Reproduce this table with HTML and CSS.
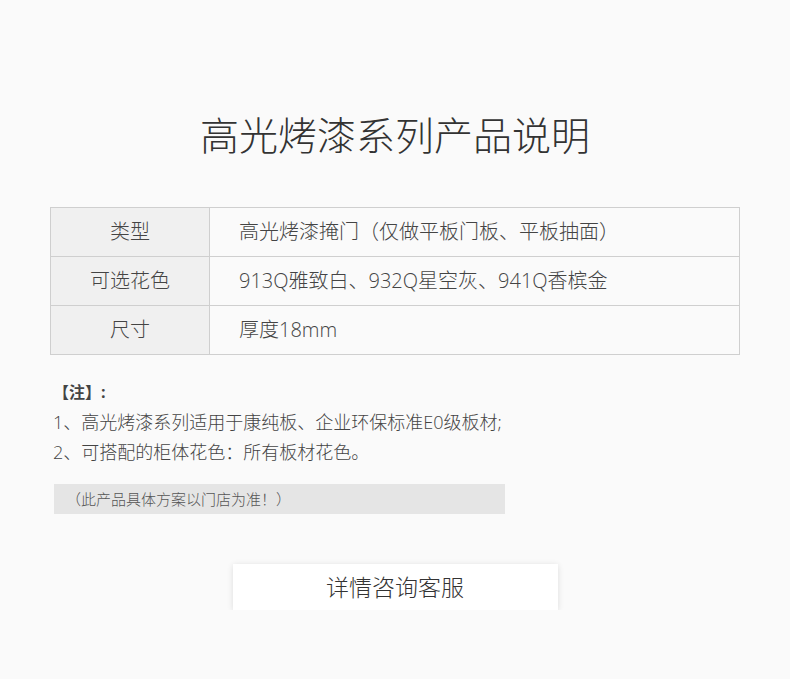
FILE: index.html
```html
<!DOCTYPE html>
<html lang="zh-CN">
<head>
    <meta charset="UTF-8">
    <meta name="viewport" content="width=device-width, initial-scale=1.0">
    <title>高光烤漆系列产品说明</title>
    <link rel="stylesheet" href="styles.css">
</head>
<body>
    <div class="page">
        <h1 class="title">高光烤漆系列产品说明</h1>

        <table class="spec-table">
            <tr>
                <th>类型</th>
                <td>高光烤漆掩门（仅做平板门板、平板抽面）</td>
            </tr>
            <tr>
                <th>可选花色</th>
                <td>913Q雅致白、932Q星空灰、941Q香槟金</td>
            </tr>
            <tr>
                <th>尺寸</th>
                <td>厚度18mm</td>
            </tr>
        </table>

        <div class="notes">
            <div class="notes-head">【注】:</div>
            <p>1、高光烤漆系列适用于康纯板、企业环保标准E0级板材;</p>
            <p>2、可搭配的柜体花色：所有板材花色。</p>
            <div class="notes-tip">（此产品具体方案以门店为准！）</div>
        </div>

        <div class="actions">
            <a class="btn-service" href="#">详情咨询客服</a>
        </div>
    </div>
</body>
</html>
```

FILE: styles.css
```css
body {
    font-family: "Open Sans", "Noto Sans CJK SC", sans-serif;
    font-weight: 300;
    margin: 0;
    padding: 0;
    background-color: #fafafa;
    color: #333;
}
.page {
    width: 690px;
    margin: 0 auto;
    padding-top: 108px;
}
.title {
    margin: 0;
    font-size: 39px;
    font-weight: 300;
    line-height: 54px;
    text-align: center;
    color: #333;
}
.spec-table {
    width: 690px;
    margin-top: 45px;
    border-collapse: collapse;
    font-size: 20px;
}
.spec-table th,
.spec-table td {
    border: 1px solid #cfcfcf;
    height: 44px;
    padding: 0 0 4px;
    font-weight: 300;
}
.spec-table th {
    width: 158px;
    background-color: #f0f0f0;
    text-align: center;
    color: #444;
}
.spec-table td {
    padding-left: 29px;
    color: #444;
}
.notes {
    margin-top: 25px;
    padding-left: 3px;
    font-size: 18px;
    color: #444;
}
.notes-head {
    font-size: 16px;
    font-weight: bold;
    line-height: 24px;
    margin-bottom: 3px;
}
.notes p {
    margin: 0;
    line-height: 30px;
}
.notes-tip {
    width: 439px;
    height: 30px;
    line-height: 30px;
    margin-top: 17px;
    margin-left: 1px;
    padding-left: 12px;
    background-color: #e5e5e5;
    font-size: 15px;
    color: #555;
}
.actions {
    display: flex;
    justify-content: center;
    margin-top: 50px;
}
.btn-service {
    display: block;
    width: 325px;
    height: 46px;
    line-height: 46px;
    background-color: #fff;
    box-shadow: 0 1px 6px rgba(0,0,0,0.12);
    text-align: center;
    font-size: 23px;
    color: #333;
    text-decoration: none;
}
```
